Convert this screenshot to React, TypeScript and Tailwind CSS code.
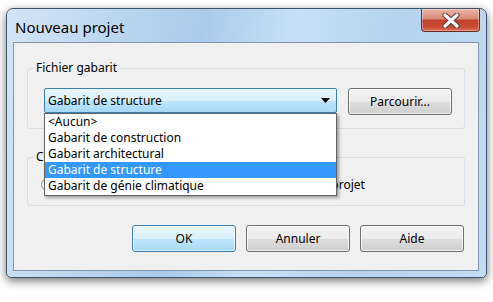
import React from "react";

const items = [
  "<Aucun>",
  "Gabarit de construction",
  "Gabarit architectural",
  "Gabarit de structure",
  "Gabarit de génie climatique",
];

function WinButton({ label, primary }: { label: string; primary?: boolean }) {
  return (
    <button
      className={
        primary
          ? "w-[104px] h-[27px] rounded-[3px] border border-[#3c7fb1] bg-[linear-gradient(#eaf6fd_0%,#d9f0fc_50%,#bee6fd_51%,#a7d9f5_100%)] shadow-[inset_0_0_0_1px_rgba(255,255,255,0.6)] text-[12px] text-black"
          : "w-[104px] h-[27px] rounded-[3px] border border-[#707070] bg-[linear-gradient(#f2f2f2_0%,#ebebeb_50%,#dddddd_51%,#cfcfcf_100%)] shadow-[inset_0_0_0_1px_rgba(255,255,255,0.7)] text-[12px] text-black"
      }
    >
      {label}
    </button>
  );
}

export default function App() {
  return (
    <div className="w-[493px] h-[302px] bg-white pt-[8px] pl-[6px] font-['Noto_Sans',sans-serif] overflow-hidden">
      <div className="w-[481px] h-[270px] flex flex-col rounded-t-[7px] rounded-b-[5px] border border-[#3f5368] bg-[linear-gradient(100deg,#d3e5f6_0%,#bcd7f0_20%,#a9cbea_38%,#c6e0f7_55%,#b5d3ef_75%,#c2dcf4_100%)] shadow-[0_3px_10px_rgba(0,0,0,0.55)]">
        {/* title bar */}
        <div className="h-[33px] flex justify-between items-start">
          <div className="pl-[8px] pt-[8px] text-[15px] leading-[20px] text-black">
            Nouveau projet
          </div>
          <div className="mr-[6px] w-[59px] h-[23px] rounded-b-[4px] border border-t-0 border-[#6e2a20] bg-[linear-gradient(#eab1a4_0%,#d98b79_45%,#c2432b_50%,#c84a30_80%,#d9705a_100%)] shadow-[inset_0_0_0_1px_rgba(255,255,255,0.35)] flex items-center justify-center">
            <svg width="20" height="15" viewBox="0 0 20 15">
              <path
                d="M4 2 L16 13 M16 2 L4 13"
                stroke="#5a3a36"
                strokeWidth="5.2"
                strokeLinecap="round"
              />
              <path
                d="M4 2 L16 13 M16 2 L4 13"
                stroke="#ffffff"
                strokeWidth="3.2"
                strokeLinecap="round"
              />
            </svg>
          </div>
        </div>

        {/* client area */}
        <div className="ml-[6px] w-[466px] h-[229px] border border-[#8096b0] bg-[#f0f0f0] flex flex-col text-[12px] text-black">
          <fieldset className="ml-[13px] mt-[17px] w-[438px] rounded-[3px] border border-[#d5dfe5]">
            <legend className="ml-[6px] px-[2px] leading-[16px]">Fichier gabarit</legend>
            <div className="flex items-start justify-between pl-[16px] pr-[12px] pt-[12px] pb-[13px]">
              <div className="relative">
                <div className="w-[293px] h-[25px] rounded-[2px] border border-[#3c7fb1] bg-[linear-gradient(#eaf6fd_0%,#d9f0fc_50%,#bee6fd_51%,#a7d9f5_100%)] flex items-center justify-between pl-[3px] pr-[6px]">
                  <span>Gabarit de structure</span>
                  <svg width="9" height="5" viewBox="0 0 9 5">
                    <path d="M0 0 H9 L4.5 5 Z" fill="#000" />
                  </svg>
                </div>
                <div className="absolute top-[25px] left-0 z-10 w-[293px] h-[83px] border border-[#646464] bg-white shadow-[2px_2px_3px_rgba(0,0,0,0.35)] flex flex-col">
                  {items.map((it) => (
                    <div
                      key={it}
                      className={
                        it === "Gabarit de structure"
                          ? "h-[16px] leading-[16px] pl-[3px] bg-[#3399ff] text-white"
                          : "h-[16px] leading-[16px] pl-[3px]"
                      }
                    >
                      {it}
                    </div>
                  ))}
                </div>
              </div>
              <WinButton label="Parcourir..." />
            </div>
          </fieldset>

          <fieldset className="ml-[13px] mt-[20px] w-[438px] rounded-[3px] border border-[#d5dfe5]">
            <legend className="ml-[6px] px-[2px] leading-[16px]">Créer un nouveau</legend>
            <div className="flex items-center h-[13px] mt-[13px] mb-[14px] pl-[13px]">
              <label className="w-[210px] flex items-center gap-[5px]">
                <span className="w-[13px] h-[13px] rounded-full border border-[#8c8c8c] bg-[linear-gradient(#e6e6e6,#ffffff)] flex items-center justify-center">
                  <span className="w-[5px] h-[5px] rounded-full bg-[#2a5c9a]" />
                </span>
                <span>Projet</span>
              </label>
              <label className="flex items-center gap-[5px]">
                <span className="w-[13px] h-[13px] rounded-full border border-[#8c8c8c] bg-[linear-gradient(#e6e6e6,#ffffff)]" />
                <span>Gabarit de projet</span>
              </label>
            </div>
          </fieldset>

          <div className="mt-[19px] pr-[14px] flex justify-end gap-[10px]">
            <WinButton label="OK" primary />
            <WinButton label="Annuler" />
            <WinButton label="Aide" />
          </div>
        </div>
      </div>
    </div>
  );
}
